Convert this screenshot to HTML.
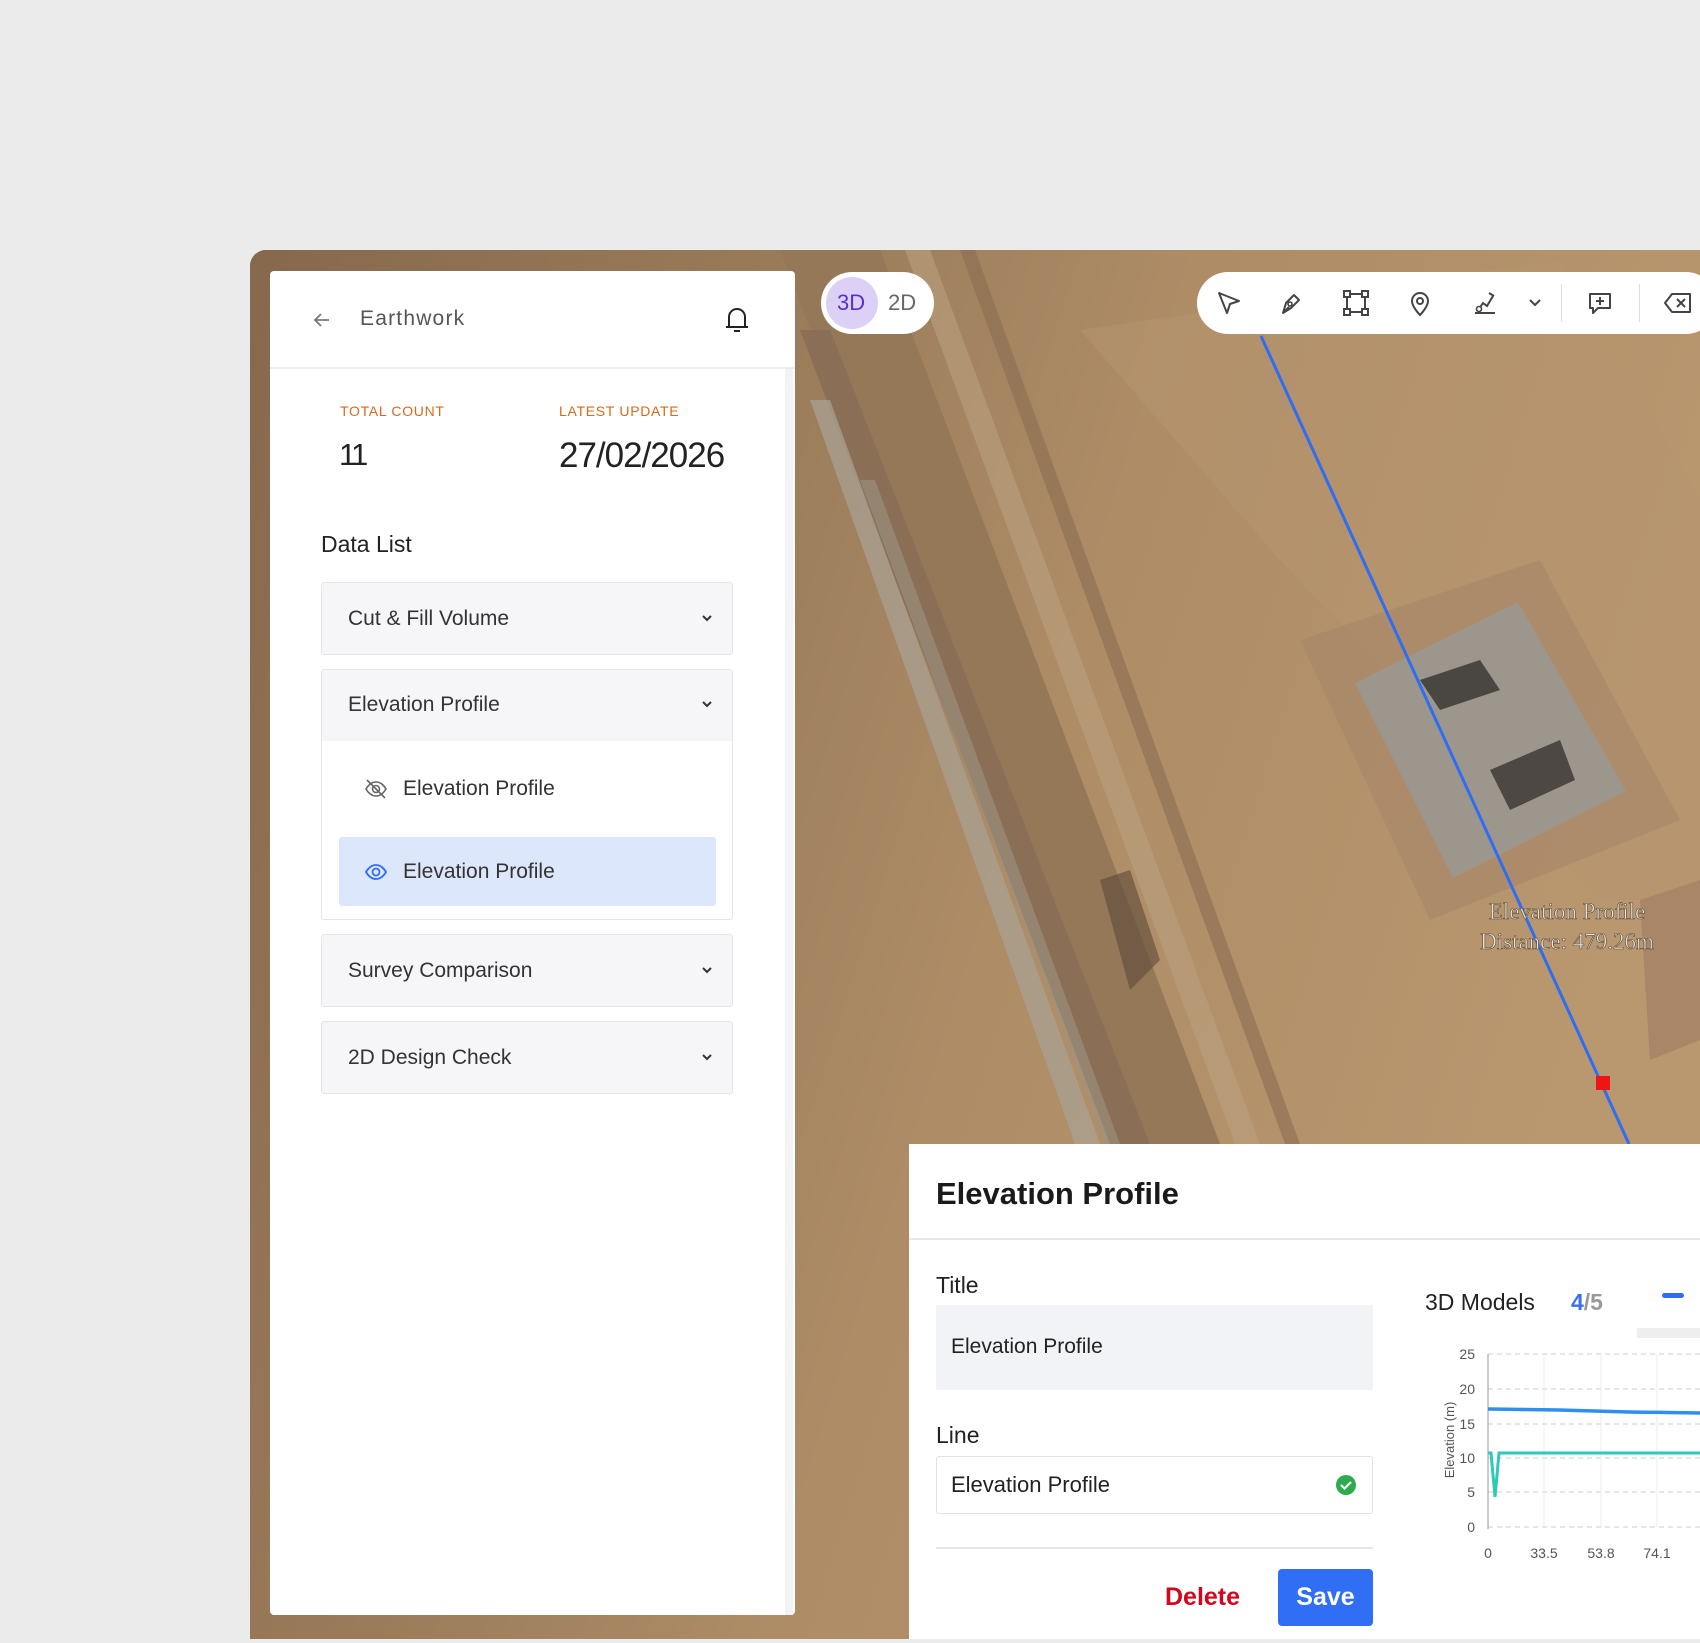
<!DOCTYPE html>
<html><head><meta charset="utf-8"><style>
*{margin:0;padding:0;box-sizing:border-box}
body{width:1700px;height:1643px;background:#ebebeb;position:relative;overflow:hidden;font-family:"Liberation Sans",sans-serif;color:#222}
.abs{position:absolute}
#map{left:250px;top:250px;width:1450px;height:1389px;border-top-left-radius:16px;overflow:hidden;background:#a98a66}
.panel{left:270px;top:271px;width:525px;height:1344px;background:#fff;border-radius:4px}
.acc{position:absolute;left:51px;width:412px;background:#f6f6f9;border:1px solid #e4e4ea;border-radius:3px}
.acc .t{position:absolute;left:26px;font-size:21px;color:#333}
.chev{position:absolute;right:18px}
.tb svg{position:absolute}
</style></head><body>
<div id="map" class="abs">
<svg width="1450" height="1389" viewBox="250 250 1450 1389" style="position:absolute;left:0;top:0">
<defs>
<linearGradient id="g1" x1="0" y1="0" x2="1" y2="0.3">
<stop offset="0" stop-color="#86694d"/><stop offset="0.35" stop-color="#9a7c5a"/><stop offset="0.6" stop-color="#ad8c66"/><stop offset="1" stop-color="#b9976f"/></linearGradient>
</defs>
<rect x="250" y="250" width="1450" height="1389" fill="url(#g1)"/>
<polygon points="780,250 880,250 1220,1144 1120,1144" fill="#957858"/>
<polygon points="800,330 830,330 1150,1144 1110,1144" fill="#8a6e55"/>
<polygon points="810,400 830,400 1100,1144 1075,1144" fill="#a9a295" opacity="0.7"/>
<polygon points="860,480 875,480 1120,1144 1105,1144" fill="#9c9282" opacity="0.6"/>
<polygon points="905,250 930,250 1260,1144 1235,1144" fill="#bba07e" opacity="0.6"/>
<polygon points="960,250 975,250 1300,1144 1285,1144" fill="#8a6d52" opacity="0.6"/>
<polygon points="1080,330 1560,260 1700,500 1700,900 1600,900 1280,560" fill="#b69570" opacity="0.5"/>
<polygon points="1300,640 1540,560 1680,820 1430,920" fill="#a8886a" opacity="0.7"/>
<polygon points="1355,683 1518,602 1626,791 1453,878" fill="#9d968d"/>
<polygon points="1420,680 1480,660 1500,690 1440,710" fill="#4a4642"/>
<polygon points="1490,770 1560,740 1575,780 1510,810" fill="#4d4843"/>
<polygon points="1100,880 1130,870 1160,960 1130,990" fill="#5b4a38" opacity="0.6"/>
<polygon points="1640,900 1700,880 1700,1040 1650,1060" fill="#9a7560" opacity="0.5"/>
<line x1="1261" y1="336" x2="1629" y2="1144" stroke="#2f6df2" stroke-width="3"/>
<rect x="1596" y="1076" width="14" height="14" fill="#f01515"/>
<g font-family="Liberation Serif,serif" font-size="23" fill="#e8e2d8" stroke="#5a4a3a" stroke-width="0.6" text-anchor="middle">
<text x="1567" y="919">Elevation Profile</text>
<text x="1567" y="949">Distance: 479.26m</text></g>
</svg>
</div>

<div class="abs panel">
<div class="abs" style="left:0;top:0;width:525px;height:98px;border-bottom:2px solid #ececef"></div>
<svg class="abs" style="left:41px;top:38px" width="22" height="22" viewBox="0 0 22 22"><path d="M18 11H4M10 5l-6 6 6 6" fill="none" stroke="#777" stroke-width="1.8"/></svg>
<div class="abs" style="left:90px;top:36px;font-size:21px;color:#555;letter-spacing:1.2px">Earthwork</div>
<svg class="abs" style="left:454px;top:34px" width="26" height="30" viewBox="0 0 26 30"><path d="M5 22V12a8 8 0 0 1 16 0v10M2 22h22M10 26h6" fill="none" stroke="#222" stroke-width="2"/></svg>
<div class="abs" style="left:70px;top:132px;font-size:14px;color:#d8691e;letter-spacing:.7px">TOTAL COUNT</div>
<div class="abs" style="left:289px;top:132px;font-size:14px;color:#d8691e;letter-spacing:.7px">LATEST UPDATE</div>
<div class="abs" style="left:69px;top:166px;font-size:31px;color:#222;letter-spacing:-3px">11</div>
<div class="abs" style="left:289px;top:165px;font-size:35px;color:#222;letter-spacing:-1px">27/02/2026</div>
<div class="abs" style="left:51px;top:260px;font-size:23px;color:#222">Data List</div>
<div class="acc" style="top:311px;height:73px"><div class="t" style="top:24px">Cut &amp; Fill Volume</div><svg class="chev" style="top:28px" width="14" height="14" viewBox="0 0 14 14"><path d="M3 5l4 4 4-4" fill="none" stroke="#333" stroke-width="2"/></svg></div>
<div class="acc" style="top:398px;height:251px;background:#fff">
<div class="abs" style="left:0;top:0;width:410px;height:71px;background:#f6f6f9"></div>
<div class="t" style="top:23px">Elevation Profile</div><svg class="chev" style="top:27px" width="14" height="14" viewBox="0 0 14 14"><path d="M3 5l4 4 4-4" fill="none" stroke="#333" stroke-width="2"/></svg>
<svg class="abs" style="left:42px;top:108px" width="24" height="22" viewBox="0 0 24 22"><path d="M2 11c3-5 6-7 10-7s7 2 10 7c-3 5-6 7-10 7s-7-2-10-7z" fill="none" stroke="#666" stroke-width="1.6"/><circle cx="12" cy="11" r="3.5" fill="none" stroke="#666" stroke-width="1.6"/><path d="M3 2l18 18" stroke="#666" stroke-width="1.6"/></svg>
<div class="abs" style="left:81px;top:107px;font-size:21px;color:#333">Elevation Profile</div>
<div class="abs" style="left:17px;top:167px;width:377px;height:69px;background:#dde7fb;border-radius:3px">
<svg class="abs" style="left:25px;top:24px" width="24" height="22" viewBox="0 0 24 22"><path d="M2 11c3-5 6-7 10-7s7 2 10 7c-3 5-6 7-10 7s-7-2-10-7z" fill="none" stroke="#2f6df2" stroke-width="1.8"/><circle cx="12" cy="11" r="3.5" fill="none" stroke="#2f6df2" stroke-width="1.8"/></svg>
<div class="abs" style="left:64px;top:23px;font-size:21px;color:#333">Elevation Profile</div></div>
</div>
<div class="acc" style="top:663px;height:73px"><div class="t" style="top:24px">Survey Comparison</div><svg class="chev" style="top:28px" width="14" height="14" viewBox="0 0 14 14"><path d="M3 5l4 4 4-4" fill="none" stroke="#333" stroke-width="2"/></svg></div>
<div class="acc" style="top:750px;height:73px"><div class="t" style="top:24px">2D Design Check</div><svg class="chev" style="top:28px" width="14" height="14" viewBox="0 0 14 14"><path d="M3 5l4 4 4-4" fill="none" stroke="#333" stroke-width="2"/></svg></div>
<div class="abs" style="left:515px;top:98px;width:8px;height:1246px;background:#f3f3f3"></div>
</div>

<div class="abs" style="left:821px;top:272px;width:113px;height:62px;background:#fff;border-radius:31px">
<div class="abs" style="left:5px;top:5px;width:52px;height:52px;border-radius:50%;background:#ddd0f6"></div>
<div class="abs" style="left:16px;top:18px;font-size:22px;color:#5a2fd0">3D</div>
<div class="abs" style="left:67px;top:18px;font-size:22px;color:#666">2D</div>
</div>

<div class="abs tb" style="left:1197px;top:272px;width:520px;height:62px;background:#fff;border-radius:31px">
<svg style="left:18px;top:17px" width="28" height="28" viewBox="0 0 28 28"><path d="M4 4l20 8-9 3-3 9z" fill="none" stroke="#444" stroke-width="2" stroke-linejoin="round"/></svg>
<svg style="left:80px;top:17px" width="28" height="28" viewBox="0 0 28 28"><path d="M6 24l3-10 8-8 5 5-8 8zM6 24l6-6M17 6l5 5" fill="none" stroke="#444" stroke-width="2" stroke-linejoin="round"/><circle cx="13" cy="15" r="2" fill="none" stroke="#444" stroke-width="1.6"/></svg>
<svg style="left:145px;top:17px" width="28" height="28" viewBox="0 0 28 28"><rect x="5" y="5" width="18" height="18" fill="none" stroke="#444" stroke-width="2"/><rect x="2" y="2" width="6" height="6" fill="#fff" stroke="#444" stroke-width="2"/><rect x="20" y="2" width="6" height="6" fill="#fff" stroke="#444" stroke-width="2"/><rect x="2" y="20" width="6" height="6" fill="#fff" stroke="#444" stroke-width="2"/><rect x="20" y="20" width="6" height="6" fill="#fff" stroke="#444" stroke-width="2"/></svg>
<svg style="left:209px;top:17px" width="28" height="28" viewBox="0 0 28 28"><path d="M14 26s-8-8-8-14a8 8 0 0 1 16 0c0 6-8 14-8 14z" fill="none" stroke="#444" stroke-width="2"/><circle cx="14" cy="12" r="3" fill="none" stroke="#444" stroke-width="2"/></svg>
<svg style="left:274px;top:17px" width="28" height="28" viewBox="0 0 28 28"><path d="M4 24h20M8 20l4-6 4 3 6-10M18 4l5 3" fill="none" stroke="#444" stroke-width="2"/><circle cx="8" cy="20" r="2.5" fill="#fff" stroke="#444" stroke-width="1.6"/></svg>
<svg style="left:330px;top:24px" width="16" height="14" viewBox="0 0 16 14"><path d="M3 4l5 5 5-5" fill="none" stroke="#444" stroke-width="2"/></svg>
<div class="abs" style="left:364px;top:12px;width:1px;height:38px;background:#ddd"></div>
<svg style="left:389px;top:17px" width="28" height="28" viewBox="0 0 28 28"><path d="M4 5h20v14H12l-5 5v-5H4z" fill="none" stroke="#444" stroke-width="2" stroke-linejoin="round"/><path d="M14 8v8M10 12h8" stroke="#444" stroke-width="2"/></svg>
<div class="abs" style="left:442px;top:12px;width:1px;height:38px;background:#ddd"></div>
<svg style="left:466px;top:17px" width="30" height="28" viewBox="0 0 30 28"><path d="M9 5h18v18H9l-7-9z" fill="none" stroke="#444" stroke-width="2" stroke-linejoin="round"/><path d="M14 10l8 8M22 10l-8 8" stroke="#444" stroke-width="2"/></svg>
</div>

<div class="abs" style="left:909px;top:1144px;width:791px;height:495px;background:#fff">
<div class="abs" style="left:27px;top:32px;font-size:31px;font-weight:bold;color:#1a1a1a">Elevation Profile</div>
<div class="abs" style="left:0;top:94px;width:791px;height:2px;background:#e6e6e9"></div>
<div class="abs" style="left:27px;top:128px;font-size:23px;color:#222">Title</div>
<div class="abs" style="left:27px;top:161px;width:437px;height:85px;background:#f2f3f6"></div>
<div class="abs" style="left:42px;top:191px;font-size:21px;color:#222">Elevation Profile</div>
<div class="abs" style="left:27px;top:278px;font-size:23px;color:#222">Line</div>
<div class="abs" style="left:27px;top:312px;width:437px;height:58px;border:1px solid #e2e2e6;border-radius:3px"></div>
<div class="abs" style="left:42px;top:328px;font-size:22px;color:#222">Elevation Profile</div>
<svg class="abs" style="left:426px;top:330px" width="22" height="22" viewBox="0 0 22 22"><circle cx="11" cy="11" r="10" fill="#2eaa4f"/><path d="M6 11l3.5 3.5L16 8" fill="none" stroke="#fff" stroke-width="2.2"/></svg>
<div class="abs" style="left:27px;top:403px;width:437px;height:2px;background:#e6e6e9"></div>
<div class="abs" style="left:256px;top:439px;font-size:25px;font-weight:bold;color:#d2061c">Delete</div>
<div class="abs" style="left:369px;top:425px;width:95px;height:57px;background:#2f6ef5;border-radius:4px;color:#fff;font-size:25px;font-weight:bold;text-align:center;line-height:57px">Save</div>
<div class="abs" style="left:516px;top:145px;font-size:23px;color:#222">3D Models</div>
<div class="abs" style="left:662px;top:145px;font-size:23px;font-weight:bold"><span style="color:#3d6ef0">4</span><span style="color:#999">/5</span></div>
<div class="abs" style="left:753px;top:149px;width:22px;height:5px;border-radius:3px;background:#2f6df2"></div>
<div class="abs" style="left:728px;top:184px;width:70px;height:10px;background:#eee"></div>
<svg class="abs" style="left:500px;top:190px" width="291" height="230" viewBox="0 0 291 230">
<g stroke="#ccc" stroke-dasharray="5,4" stroke-width="1"><line x1="79" y1="20" x2="291" y2="20"/><line x1="79" y1="55" x2="291" y2="55"/><line x1="79" y1="90" x2="291" y2="90"/><line x1="79" y1="124" x2="291" y2="124"/><line x1="79" y1="158" x2="291" y2="158"/><line x1="79" y1="193" x2="291" y2="193"/></g>
<g stroke="#eee"><line x1="135" y1="20" x2="135" y2="193"/><line x1="192" y1="20" x2="192" y2="193"/><line x1="248" y1="20" x2="248" y2="193"/></g>
<line x1="79" y1="20" x2="79" y2="195" stroke="#999"/>
<g font-size="14" fill="#555" text-anchor="end"><text x="66" y="25">25</text><text x="66" y="60">20</text><text x="66" y="95">15</text><text x="66" y="129">10</text><text x="66" y="163">5</text><text x="66" y="198">0</text></g>
<g font-size="14" fill="#555" text-anchor="middle"><text x="79" y="224">0</text><text x="135" y="224">33.5</text><text x="192" y="224">53.8</text><text x="248" y="224">74.1</text></g>
<text transform="translate(45,106) rotate(-90)" font-size="13" fill="#555" text-anchor="middle">Elevation (m)</text>
<path d="M79 75L150 76L220 78L291 79" fill="none" stroke="#2f8ff0" stroke-width="3.5"/>
<path d="M79 119L82 119L86 163L90 119L291 119" fill="none" stroke="#2ec9b8" stroke-width="3"/>
</svg>
</div>
</body></html>
